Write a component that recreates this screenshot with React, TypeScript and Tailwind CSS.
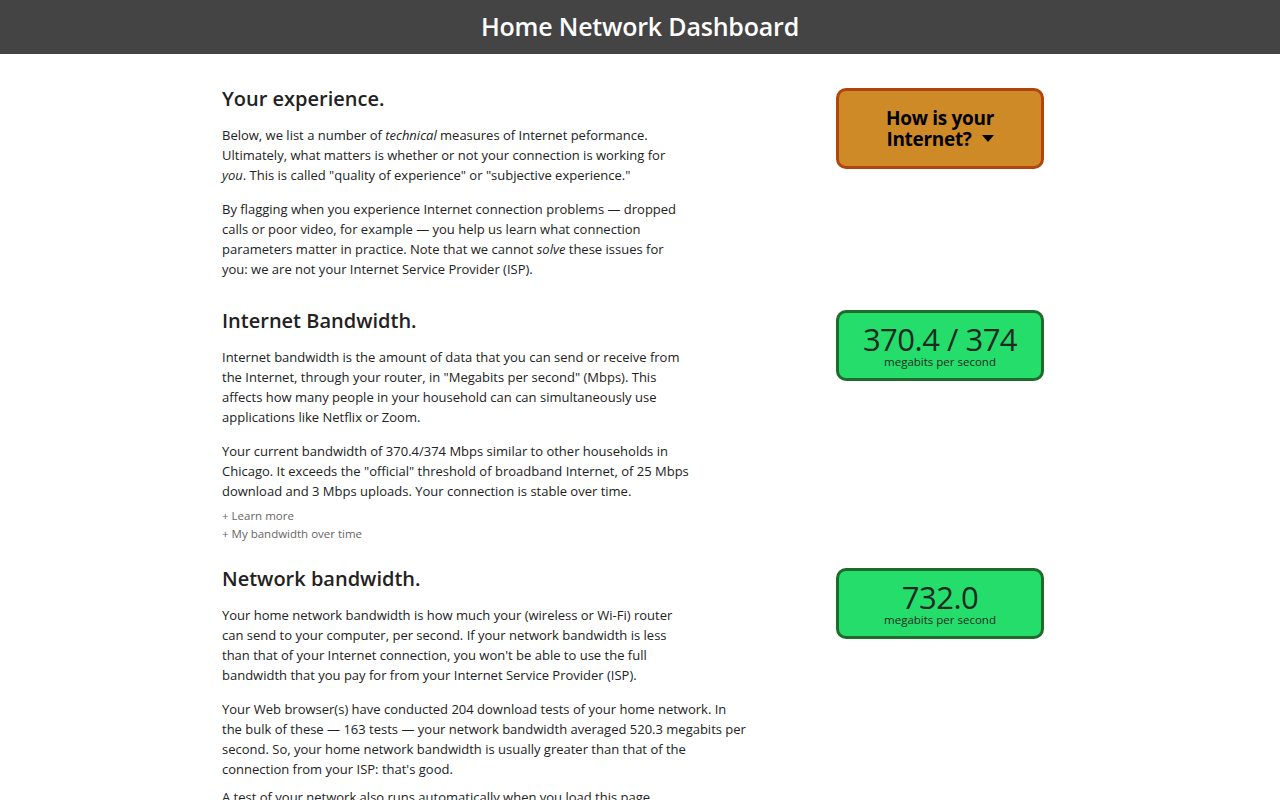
import React from "react";

const font = { fontFamily: '"Open Sans", "Noto Sans", sans-serif' };

function Lines({ lines }: { lines: React.ReactNode[] }) {
  return (
    <p className="text-[13px] leading-[20px] text-[#222]">
      {lines.map((l, i) => (
        <span key={i} className="block whitespace-nowrap">
          {l}
        </span>
      ))}
    </p>
  );
}

function GreenBox({ value }: { value: string }) {
  return (
    <div className="mt-[3px] w-[208px] h-[71px] rounded-[10px] border-[3px] border-[#1e6b2c] bg-[#25dd6a] flex flex-col items-center justify-center text-[#1f2a24]">
      <div className="text-[31px] leading-[32px] font-normal tracking-[-0.5px]">{value}</div>
      <div className="text-[11.5px] leading-[14px]">megabits per second</div>
    </div>
  );
}

export default function App() {
  return (
    <div className="min-h-screen bg-white" style={font}>
      <header className="h-[54px] bg-[#444444] flex items-center justify-center">
        <h1 className="text-white text-[25px] font-semibold tracking-[-0.2px]">Home Network Dashboard</h1>
      </header>

      <main className="w-[836px] mx-auto pt-[31px]">
        {/* Section 1 */}
        <section className="flex justify-between">
          <div>
            <h2 className="text-[20px] leading-[28px] font-semibold text-[#222]">Your experience.</h2>
            <div className="mt-[12px]">
              <Lines
                lines={[
                  <>Below, we list a number of <em>technical</em> measures of Internet peformance.</>,
                  "Ultimately, what matters is whether or not your connection is working for",
                  <><em>you</em>. This is called "quality of experience" or "subjective experience."</>,
                ]}
              />
            </div>
            <div className="mt-[14px]">
              <Lines
                lines={[
                  "By flagging when you experience Internet connection problems — dropped",
                  "calls or poor video, for example — you help us learn what connection",
                  <>parameters matter in practice. Note that we cannot <em>solve</em> these issues for</>,
                  "you: we are not your Internet Service Provider (ISP).",
                ]}
              />
            </div>
          </div>
          <div className="mr-[14px]">
            <div className="mt-[3px] w-[208px] h-[81px] rounded-[10px] border-[3px] border-[#b0460e] bg-[#cf8a28] flex items-center justify-center">
              <div className="text-center text-[19px] leading-[21px] font-bold text-black tracking-[-0.3px]">
                How is your
                <br />
                Internet?
                <span className="inline-block ml-[10px] align-middle w-0 h-0 border-l-[6px] border-r-[6px] border-t-[7px] border-l-transparent border-r-transparent border-t-black relative top-[-2px]" />
              </div>
            </div>
          </div>
        </section>

        {/* Section 2 */}
        <section className="flex justify-between mt-[28px]">
          <div>
            <h2 className="text-[20px] leading-[28px] font-semibold text-[#222]">Internet Bandwidth.</h2>
            <div className="mt-[12px]">
              <Lines
                lines={[
                  "Internet bandwidth is the amount of data that you can send or receive from",
                  'the Internet, through your router, in "Megabits per second" (Mbps). This',
                  "affects how many people in your household can can simultaneously use",
                  "applications like Netflix or Zoom.",
                ]}
              />
            </div>
            <div className="mt-[14px]">
              <Lines
                lines={[
                  "Your current bandwidth of 370.4/374 Mbps similar to other households in",
                  'Chicago. It exceeds the "official" threshold of broadband Internet, of 25 Mbps',
                  "download and 3 Mbps uploads. Your connection is stable over time.",
                ]}
              />
            </div>
            <div className="mt-[6px] text-[11.5px] leading-[18px] text-[#666]">
              <div>+ Learn more</div>
              <div>+ My bandwidth over time</div>
            </div>
          </div>
          <div className="mr-[14px]">
            <GreenBox value="370.4 / 374" />
          </div>
        </section>

        {/* Section 3 */}
        <section className="flex justify-between mt-[22px]">
          <div>
            <h2 className="text-[20px] leading-[28px] font-semibold text-[#222]">Network bandwidth.</h2>
            <div className="mt-[12px]">
              <Lines
                lines={[
                  "Your home network bandwidth is how much your (wireless or Wi-Fi) router",
                  "can send to your computer, per second. If your network bandwidth is less",
                  "than that of your Internet connection, you won't be able to use the full",
                  "bandwidth that you pay for from your Internet Service Provider (ISP).",
                ]}
              />
            </div>
            <div className="mt-[14px]">
              <Lines
                lines={[
                  "Your Web browser(s) have conducted 204 download tests of your home network. In",
                  "the bulk of these — 163 tests — your network bandwidth averaged 520.3 megabits per",
                  "second. So, your home network bandwidth is usually greater than that of the",
                  "connection from your ISP: that's good.",
                ]}
              />
            </div>
            <div className="mt-[8px]">
              <Lines lines={["A test of your network also runs automatically when you load this page ..."]} />
            </div>
          </div>
          <div className="mr-[14px]">
            <GreenBox value="732.0" />
          </div>
        </section>
      </main>
    </div>
  );
}
